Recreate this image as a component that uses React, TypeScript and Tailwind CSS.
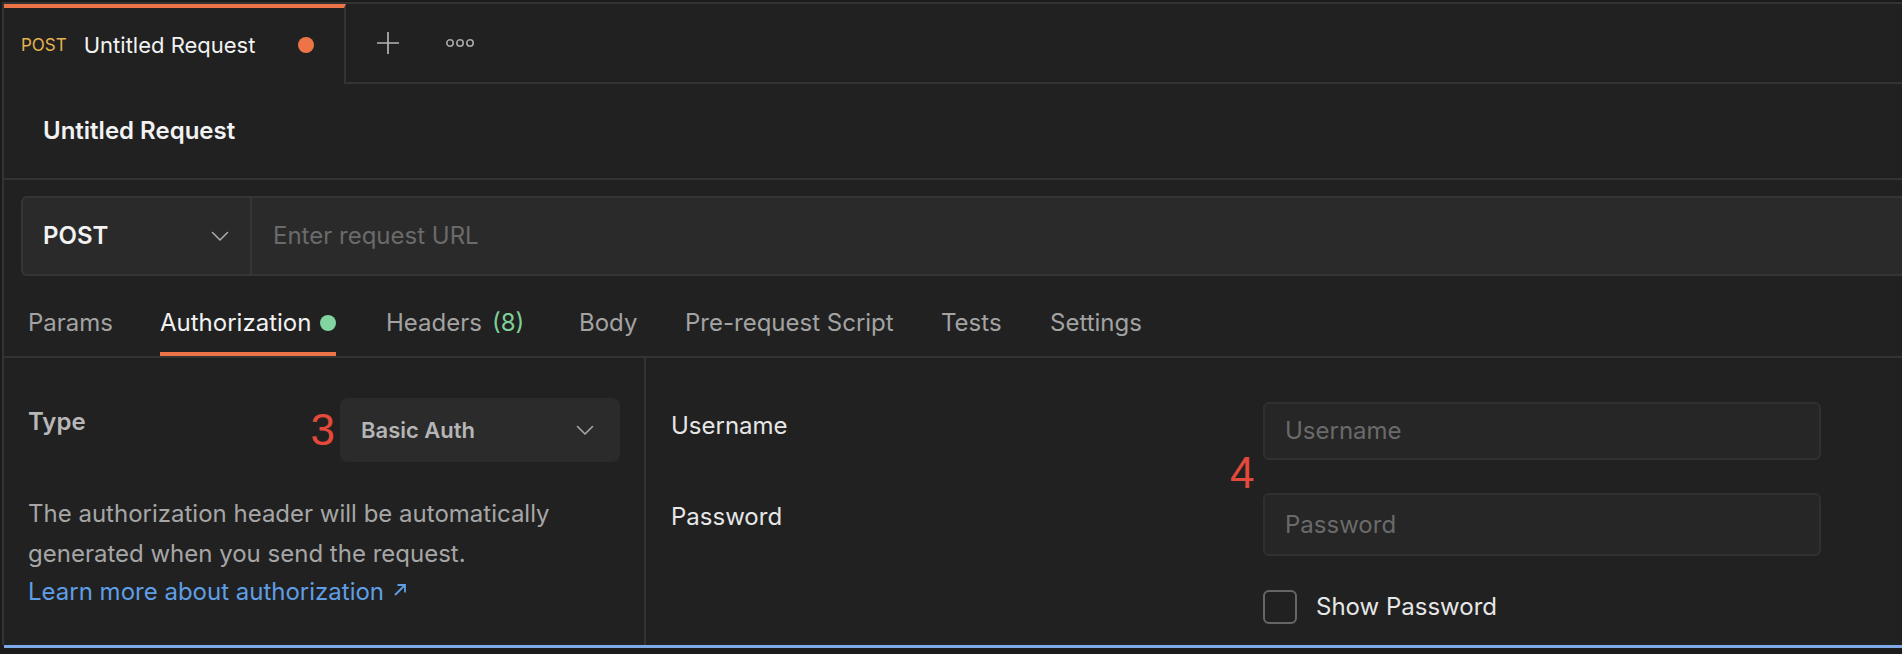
import React from "react";

const Chevron = ({ className = "" }: { className?: string }) => (
  <svg width="18" height="11" viewBox="0 0 18 11" className={className} fill="none">
    <path d="M1.5 1.5 L9 9 L16.5 1.5" stroke="#a8a8a8" strokeWidth="1.6" strokeLinecap="round" strokeLinejoin="round" />
  </svg>
);

const tabs: { label: string; w: string; active?: boolean }[] = [
  { label: "Params", w: "w-[132px]" },
  { label: "Authorization", w: "w-[226px]", active: true },
  { label: "Headers", w: "w-[193px]" },
  { label: "Body", w: "w-[106px]" },
  { label: "Pre-request Script", w: "w-[256px]" },
  { label: "Tests", w: "w-[109px]" },
  { label: "Settings", w: "w-[140px]" },
];

export default function App() {
  return (
    <div className="w-[1902px] h-[654px] bg-[#1b1b1b] overflow-hidden font-['Inter','Noto_Sans',sans-serif]">
      <div className="ml-[2px] mt-[2px] h-[643px] border-l-2 border-t-2 border-[#333333] bg-[#212121] flex flex-col">
        {/* Tab bar */}
        <div className="h-[80px] flex shrink-0">
          <div className="w-[342px] border-t-4 border-t-[#ed7446] border-r-2 border-r-[#333333] flex items-center pl-[17px] pr-[30px] pb-[2px]">
            <span className="text-[17px] text-[#e5b350] leading-none">POST</span>
            <span className="ml-[17px] text-[22px] text-[#f2f2f2] leading-none">Untitled Request</span>
            <span className="ml-auto w-[16px] h-[16px] rounded-full bg-[#ed7446]" />
          </div>
          <div className="flex-1 border-b-2 border-[#333333] flex items-center pl-[30px]">
            <svg width="24" height="24" viewBox="0 0 24 24" fill="none">
              <path d="M12 1 V23 M1 12 H23" stroke="#b4b4b4" strokeWidth="1.7" />
            </svg>
            <svg width="28" height="10" viewBox="0 0 28 10" fill="none" className="ml-[46px]">
              <circle cx="4" cy="5" r="3.2" stroke="#a8a8a8" strokeWidth="1.6" />
              <circle cx="14" cy="5" r="3.2" stroke="#a8a8a8" strokeWidth="1.6" />
              <circle cx="24" cy="5" r="3.2" stroke="#a8a8a8" strokeWidth="1.6" />
            </svg>
          </div>
        </div>

        {/* Header */}
        <div className="h-[96px] shrink-0 border-b-2 border-[#333333] flex items-center pl-[39px]">
          <span className="text-[24px] font-semibold text-[#f2f2f2]">Untitled Request</span>
        </div>

        {/* URL row */}
        <div className="pt-[16px] pl-[17px] shrink-0">
          <div className="h-[80px] flex border-2 border-r-0 border-[#353535] rounded-l-[6px] bg-[#2a2a2a]">
            <div className="w-[229px] border-r-2 border-[#353535] flex items-center justify-between pl-[20px] pr-[21px]">
              <span className="text-[24px] font-semibold text-[#f2f2f2]">POST</span>
              <Chevron />
            </div>
            <div className="flex-1 flex items-center pl-[21px]">
              <span className="text-[24px] text-[#6a6a6a]">Enter request URL</span>
            </div>
          </div>
        </div>

        {/* Tabs */}
        <div className="h-[82px] shrink-0 border-b-2 border-[#333333] flex pl-[24px]">
          {tabs.map((t) => (
            <div key={t.label} className={`${t.w} h-full flex`}>
              <div
                className={`h-full flex items-center pt-[18px] border-b-4 ${
                  t.active ? "border-[#ed7446]" : "border-transparent"
                }`}
              >
                <span className={`text-[24px] leading-none ${t.active ? "text-[#f2f2f2]" : "text-[#a3a3a3]"}`}>
                  {t.label}
                </span>
                {t.active && <span className="ml-[9px] w-[16px] h-[16px] rounded-full bg-[#82d5a0]" />}
                {t.label === "Headers" && (
                  <span className="ml-[10px] text-[24px] leading-none text-[#7fcf98]">(8)</span>
                )}
              </div>
            </div>
          ))}
        </div>

        {/* Content */}
        <div className="flex-1 flex">
          {/* Left */}
          <div className="w-[642px] border-r-2 border-[#333333] pl-[24px] pr-[24px] pt-[40px]">
            <div className="flex items-start justify-between">
              <span className="pt-[8px] leading-[32px] text-[24px] font-semibold text-[#b8b8b8]">Type</span>
              <div className="flex items-center gap-[5px]">
                <span className="font-['Liberation_Sans',sans-serif] text-[44px] leading-none text-[#e5493b]">3</span>
                <div className="w-[280px] h-[64px] rounded-[8px] bg-[#2b2b2b] flex items-center justify-between pl-[21px] pr-[26px]">
                  <span className="text-[22px] font-semibold text-[#b5b5b5]">Basic Auth</span>
                  <Chevron />
                </div>
              </div>
            </div>
            <p className="mt-[32px] text-[24px] leading-[40px] text-[#a6a6a6]">
              The authorization header will be automatically
              <br />
              generated when you send the request.
            </p>
            <div className="flex items-center leading-[36px] text-[24px] text-[#5f9ee6]">
              <span>Learn more about authorization</span>
              <svg width="14" height="14" viewBox="0 0 14 14" fill="none" className="ml-[9px] mb-[4px]">
                <path d="M2 12 L12 2 M4.5 2 H12 V9.5" stroke="#5f9ee6" strokeWidth="1.8" />
              </svg>
            </div>
          </div>

          {/* Right */}
          <div className="flex-1 pl-[25px] pt-[44px] relative">
            <span className="absolute left-[584px] top-[93px] font-['Liberation_Sans',sans-serif] text-[44px] leading-none text-[#e5493b]">
              4
            </span>
            <div className="flex">
              <div className="w-[592px] pt-[8px] leading-[32px] text-[24px] text-[#e6e6e6]">Username</div>
              <div className="w-[558px] h-[58px] rounded-[6px] border-2 border-[#303030] bg-[#262626] flex items-center pl-[20px]">
                <span className="text-[24px] text-[#6a6a6a]">Username</span>
              </div>
            </div>
            <div className="flex mt-[33px]">
              <div className="w-[592px] pt-[8px] leading-[32px] text-[24px] text-[#e6e6e6]">Password</div>
              <div className="w-[558px] h-[63px] rounded-[6px] border-2 border-[#303030] bg-[#262626] flex items-center pl-[20px]">
                <span className="text-[24px] text-[#6a6a6a]">Password</span>
              </div>
            </div>
            <div className="flex items-center mt-[33px] ml-[592px]">
              <div className="w-[34px] h-[34px] rounded-[6px] border-2 border-[#666666]" />
              <span className="ml-[19px] text-[24px] text-[#e6e6e6]">Show Password</span>
            </div>
          </div>
        </div>
      </div>
      <div className="ml-[4px] h-[3px] bg-[#7ea9e6]" />
    </div>
  );
}
